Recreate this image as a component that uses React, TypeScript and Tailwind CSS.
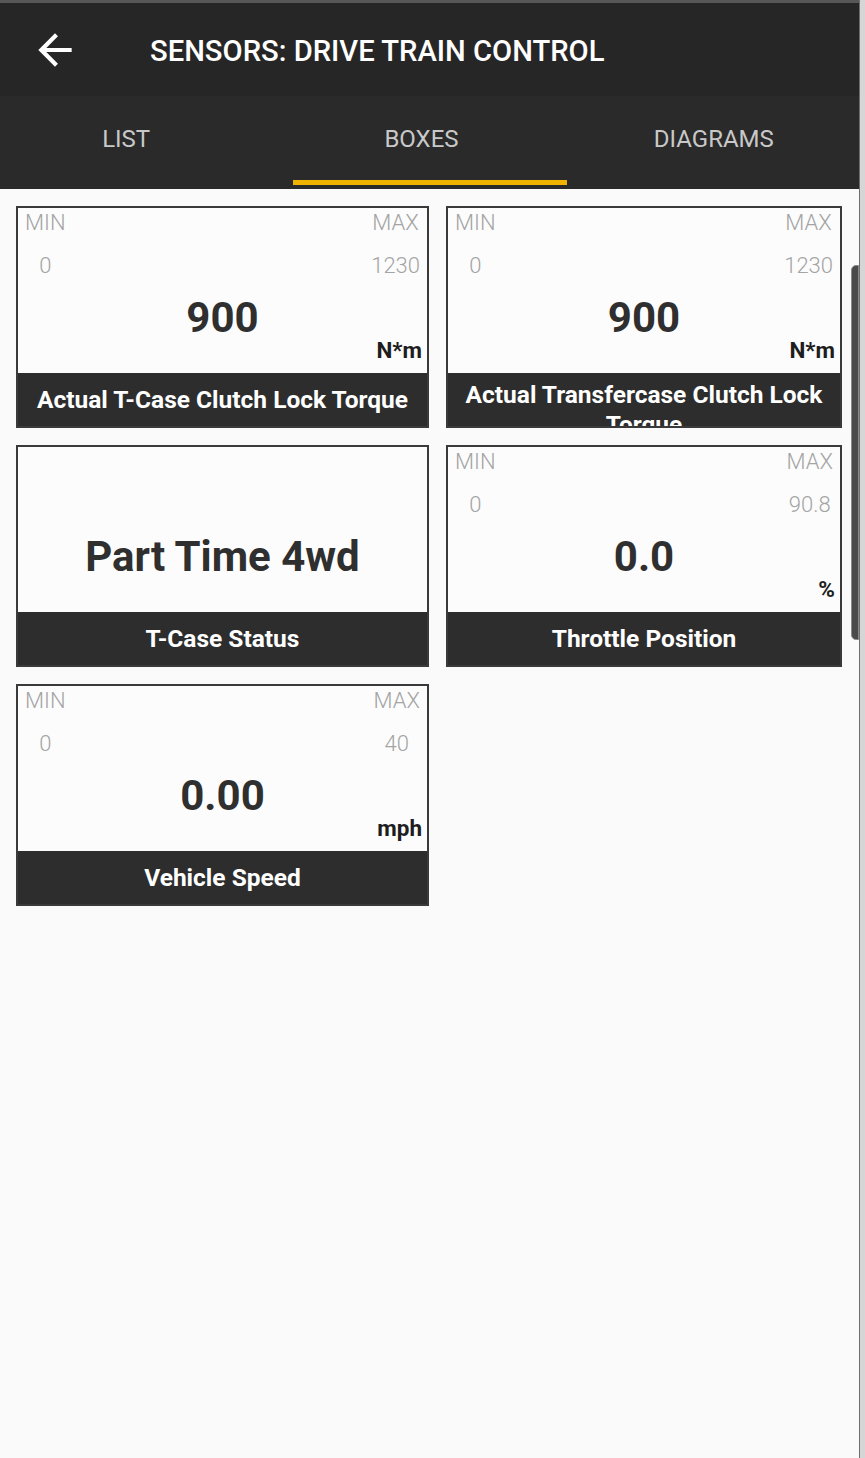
import React from "react";

type Sensor = {
  label: string;
  value: string;
  unit?: string;
  min?: string;
  max?: string;
  wrap?: boolean;
};

const sensors: Sensor[] = [
  { label: "Actual T-Case Clutch Lock Torque", value: "900", unit: "N*m", min: "0", max: "1230" },
  { label: "Actual Transfercase Clutch Lock Torque", value: "900", unit: "N*m", min: "0", max: "1230", wrap: true },
  { label: "T-Case Status", value: "Part Time 4wd" },
  { label: "Throttle Position", value: "0.0", unit: "%", min: "0", max: "90.8" },
  { label: "Vehicle Speed", value: "0.00", unit: "mph", min: "0", max: "40" },
];

function SensorBox({ s }: { s: Sensor }) {
  return (
    <div className="flex h-[222px] flex-col border-2 border-[#3a3a3a] bg-[#fcfcfc]">
      <div className="flex h-[165px] flex-col">
        {s.min !== undefined ? (
          <div className="flex justify-between px-[7px] pt-[2px] text-[22px] leading-[26px] font-light text-[#a4a4a4]">
            <div className="flex flex-col items-center">
              <span>MIN</span>
              <span className="mt-[17px]">{s.min}</span>
            </div>
            <div className="flex flex-col items-center">
              <span>MAX</span>
              <span className="mt-[17px]">{s.max}</span>
            </div>
          </div>
        ) : (
          <div className="h-[71px]" />
        )}
        <div className="mt-[18px] text-center text-[42px] leading-[42px] font-bold text-[#2f2f2f]">{s.value}</div>
        {s.unit && (
          <div className="-mt-[2px] pr-[5px] text-right text-[22.5px] leading-[26px] font-bold text-[#1e1e1e]">{s.unit}</div>
        )}
      </div>
      <div
        className={`flex h-[53px] justify-center overflow-hidden bg-[#2d2d2d] px-3 text-center text-[24.5px] font-bold text-white ${
          s.wrap ? "items-start pt-[7px] leading-[30px]" : "items-center leading-[28px]"
        }`}
      >
        {s.label}
      </div>
    </div>
  );
}

export default function App() {
  return (
    <div className="relative flex h-[1458px] w-[865px] overflow-hidden bg-[#fafafa] font-['Roboto',sans-serif]">
      <div className="flex w-[859px] flex-col">
        {/* status strip */}
        <div className="h-[3px] bg-[#575757]" />

        {/* toolbar */}
        <div className="flex h-[93px] items-center bg-[#262626]">
          <svg viewBox="0 0 24 24" className="ml-[30px] h-[50px] w-[50px] fill-white">
            <path d="M20 11H7.83l5.59-5.59L12 4l-8 8 8 8 1.41-1.41L7.83 13H20v-2z" />
          </svg>
          <h1 className="ml-[70px] pt-[4px] text-[29.2px] font-medium text-white">SENSORS: DRIVE TRAIN CONTROL</h1>
        </div>

        {/* tabs */}
        <div className="grid h-[93px] grid-cols-3 bg-[#2a2a2a] text-[24px] text-[#c8c8c8]">
          <div className="flex items-center justify-center pr-[34px] pb-[8px]">LIST</div>
          <div className="relative flex items-center justify-center pr-[16px] pb-[8px]">
            BOXES
            <div className="absolute bottom-[4px] left-[7px] right-[6px] h-[5px] bg-[#f0b400]" />
          </div>
          <div className="flex items-center justify-center pr-[4px] pb-[8px]">DIAGRAMS</div>
        </div>

        {/* boxes */}
        <div className="grid grid-cols-[413px_396px] gap-[17px] pl-[16px] pt-[17px]">
          {sensors.map((s) => (
            <SensorBox key={s.label} s={s} />
          ))}
        </div>
      </div>

      <div className="w-px bg-[#6e6e6e]" />
      <div className="w-[5px] bg-[#d6d6d6]" />

      {/* scrollbar thumb */}
      <div className="absolute left-[851px] top-[265px] h-[375px] w-[8px] rounded-l-[5px] border border-[#8a8a8a] bg-[#4a4a4a]" />
    </div>
  );
}
